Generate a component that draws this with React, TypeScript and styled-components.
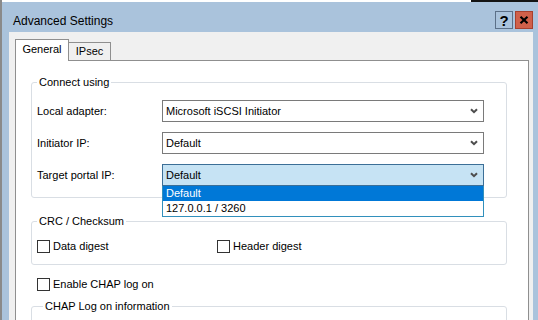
import React from "react";
import styled, { createGlobalStyle, css } from "styled-components";

const GlobalStyle = createGlobalStyle`
  html, body { margin: 0; padding: 0; }
  body {
    width: 538px;
    height: 320px;
    overflow: hidden;
    font-family: "Liberation Sans", Arial, sans-serif;
    font-size: 11px;
    color: #000;
    background: #fff;
  }
  #root { width: 538px; height: 320px; }
  * { box-sizing: border-box; }
`;

const FRAME = "#aac3dc";

const Desktop = styled.div`
  width: 538px;
  height: 320px;
  padding: 2px 0 0 2px;
  display: flex;
  overflow: hidden;
  background:
    linear-gradient(to right, #8a8a8a 0 2px, transparent 2px),
    linear-gradient(to right, #ffffff 0 471px, #141414 471px);
`;

const Window = styled.div`
  width: 536px;
  height: 318px;
  display: flex;
  flex-direction: column;
`;

const TitleBar = styled.div`
  flex: none;
  height: 30px;
  background: ${FRAME};
  display: flex;
  align-items: flex-start;
  padding: 9px 5px 0 11px;
`;

const Title = styled.div`
  flex: 1;
  margin-top: 3px;
  font-size: 12px;
  line-height: 14px;
  color: #000;
`;

const CaptionButton = styled.div<{ $kind: "help" | "close" }>`
  width: 18px;
  height: 18px;
  display: flex;
  align-items: center;
  justify-content: center;
  border: 1px solid;
  ${(p) =>
    p.$kind === "help"
      ? css`
          border-color: #5c7088;
          background: transparent;
          font-weight: bold;
          font-size: 15px;
          line-height: 1;
        `
      : css`
          margin-left: 2px;
          border-color: #a7402e;
          background: #d0604a;
        `}
`;

const Body = styled.div`
  flex: 1;
  min-height: 0;
  display: flex;
  flex-direction: column;
  background: #f0f0f0;
  border-left: 7px solid ${FRAME};
  border-right: 5px solid ${FRAME};
  padding: 7px 4px 0 6px;
  overflow: hidden;
`;

const TabRow = styled.div`
  display: flex;
  align-items: flex-end;
  margin-bottom: -1px;
  position: relative;
  z-index: 2;
`;

const Tab = styled.div<{ $active?: boolean }>`
  border: 1px solid #8f8f8f;
  border-bottom: none;
  text-align: center;
  line-height: 13px;
  ${(p) =>
    p.$active
      ? css`
          width: 54px;
          height: 22px;
          padding-top: 3px;
          background: #fff;
        `
      : css`
          width: 43px;
          height: 18px;
          margin-left: -1px;
          margin-bottom: 1px;
          padding-top: 2px;
          background: #f0f0f0;
        `}
`;

const Panel = styled.div`
  flex: 1;
  position: relative;
  background: #fff;
  border: 1px solid #8f8f8f;
  padding: 15px 21px 0 15px;
  display: flex;
  flex-direction: column;
`;

const Group = styled.fieldset<{ $mt?: number; $minH?: number }>`
  margin: ${(p) => p.$mt ?? 0}px 0 0;
  padding: 0;
  min-width: 0;
  min-height: ${(p) => p.$minH ?? 0}px;
  flex: none;
  border: 1px solid #d9dee4;
  border-radius: 3px;
`;

const Legend = styled.legend<{ $indent: number }>`
  margin-left: ${(p) => p.$indent}px;
  padding: 0 2px;
  font-size: 11px;
  line-height: 13px;
`;

const GroupBody = styled.div<{ $pad: string }>`
  padding: ${(p) => p.$pad};
  display: flex;
  flex-direction: column;
  gap: 10px;
`;

const FieldRow = styled.div`
  display: flex;
  align-items: center;
`;

const FieldLabel = styled.div`
  width: 125px;
  flex: none;
  line-height: 13px;
`;

const SelectBox = styled.div<{ $focused?: boolean }>`
  position: relative;
  width: 322px;
  height: 22px;
  display: flex;
  align-items: center;
  padding: 0 5px 0 3px;
  border: 1px solid ${(p) => (p.$focused ? "#3c6f97" : "#7a7a7a")};
  background: ${(p) => (p.$focused ? "#c6e3f4" : "#fff")};
`;

const SelectValue = styled.span`
  flex: 1;
  line-height: 13px;
  white-space: nowrap;
`;

const DropList = styled.ul`
  position: absolute;
  top: calc(100% + 1px);
  left: -1px;
  width: 322px;
  margin: 0;
  padding: 0;
  list-style: none;
  background: #fff;
  border: 1px solid #3290bc;
  border-top: none;
  z-index: 5;
`;

const DropItem = styled.li<{ $selected?: boolean }>`
  height: 15px;
  line-height: 15px;
  padding-left: 3px;
  background: ${(p) => (p.$selected ? "#0078d7" : "transparent")};
  color: ${(p) => (p.$selected ? "#fff" : "#000")};
`;

const CheckGrid = styled.div`
  display: grid;
  grid-template-columns: 180px 1fr;
`;

const CheckRow = styled.label<{ $ml?: number; $mt?: number }>`
  display: flex;
  align-items: center;
  gap: 3px;
  height: 13px;
  line-height: 13px;
  margin-left: ${(p) => p.$ml ?? 0}px;
  margin-top: ${(p) => p.$mt ?? 0}px;
`;

const CheckBox = styled.span`
  width: 13px;
  height: 13px;
  flex: none;
  border: 1px solid #333;
  background: #fff;
`;

const Chevron = () => (
  <svg width="8" height="6" viewBox="0 0 8 6" aria-hidden>
    <path d="M1 1.2 L4 4.2 L7 1.2" fill="none" stroke="#4d4d4d" strokeWidth="2" />
  </svg>
);

const CloseGlyph = () => (
  <svg width="10" height="8" viewBox="0 0 10 8" aria-hidden>
    <path d="M1.5 0.8 L8.5 7.2 M8.5 0.8 L1.5 7.2" stroke="#000" strokeWidth="2.2" />
  </svg>
);

const Select: React.FC<{ value: string; focused?: boolean; options?: string[] }> = ({
  value,
  focused,
  options,
}) => (
  <SelectBox $focused={focused}>
    <SelectValue>{value}</SelectValue>
    <Chevron />
    {options && (
      <DropList>
        {options.map((o) => (
          <DropItem key={o} $selected={o === value}>
            {o}
          </DropItem>
        ))}
      </DropList>
    )}
  </SelectBox>
);

export default function App() {
  return (
    <>
      <GlobalStyle />
      <Desktop>
        <Window>
          <TitleBar>
            <Title>Advanced Settings</Title>
            <CaptionButton $kind="help">?</CaptionButton>
            <CaptionButton $kind="close">
              <CloseGlyph />
            </CaptionButton>
          </TitleBar>
          <Body>
            <TabRow>
              <Tab $active>General</Tab>
              <Tab>IPsec</Tab>
            </TabRow>
            <Panel>
              <Group>
                <Legend $indent={5}>Connect using</Legend>
                <GroupBody $pad="11px 22px 11px 5px">
                  <FieldRow>
                    <FieldLabel>Local adapter:</FieldLabel>
                    <Select value="Microsoft iSCSI Initiator" />
                  </FieldRow>
                  <FieldRow>
                    <FieldLabel>Initiator IP:</FieldLabel>
                    <Select value="Default" />
                  </FieldRow>
                  <FieldRow>
                    <FieldLabel>Target portal IP:</FieldLabel>
                    <Select value="Default" focused options={["Default", "127.0.0.1 / 3260"]} />
                  </FieldRow>
                </GroupBody>
              </Group>

              <Group $mt={17}>
                <Legend $indent={5}>CRC / Checksum</Legend>
                <GroupBody $pad="12px 22px 11px 5px">
                  <CheckGrid>
                    <CheckRow>
                      <CheckBox />
                      Data digest
                    </CheckRow>
                    <CheckRow>
                      <CheckBox />
                      Header digest
                    </CheckRow>
                  </CheckGrid>
                </GroupBody>
              </Group>

              <CheckRow $ml={6} $mt={13}>
                <CheckBox />
                Enable CHAP log on
              </CheckRow>

              <Group $mt={9} $minH={80}>
                <Legend $indent={11}>CHAP Log on information</Legend>
              </Group>
            </Panel>
          </Body>
        </Window>
      </Desktop>
    </>
  );
}
